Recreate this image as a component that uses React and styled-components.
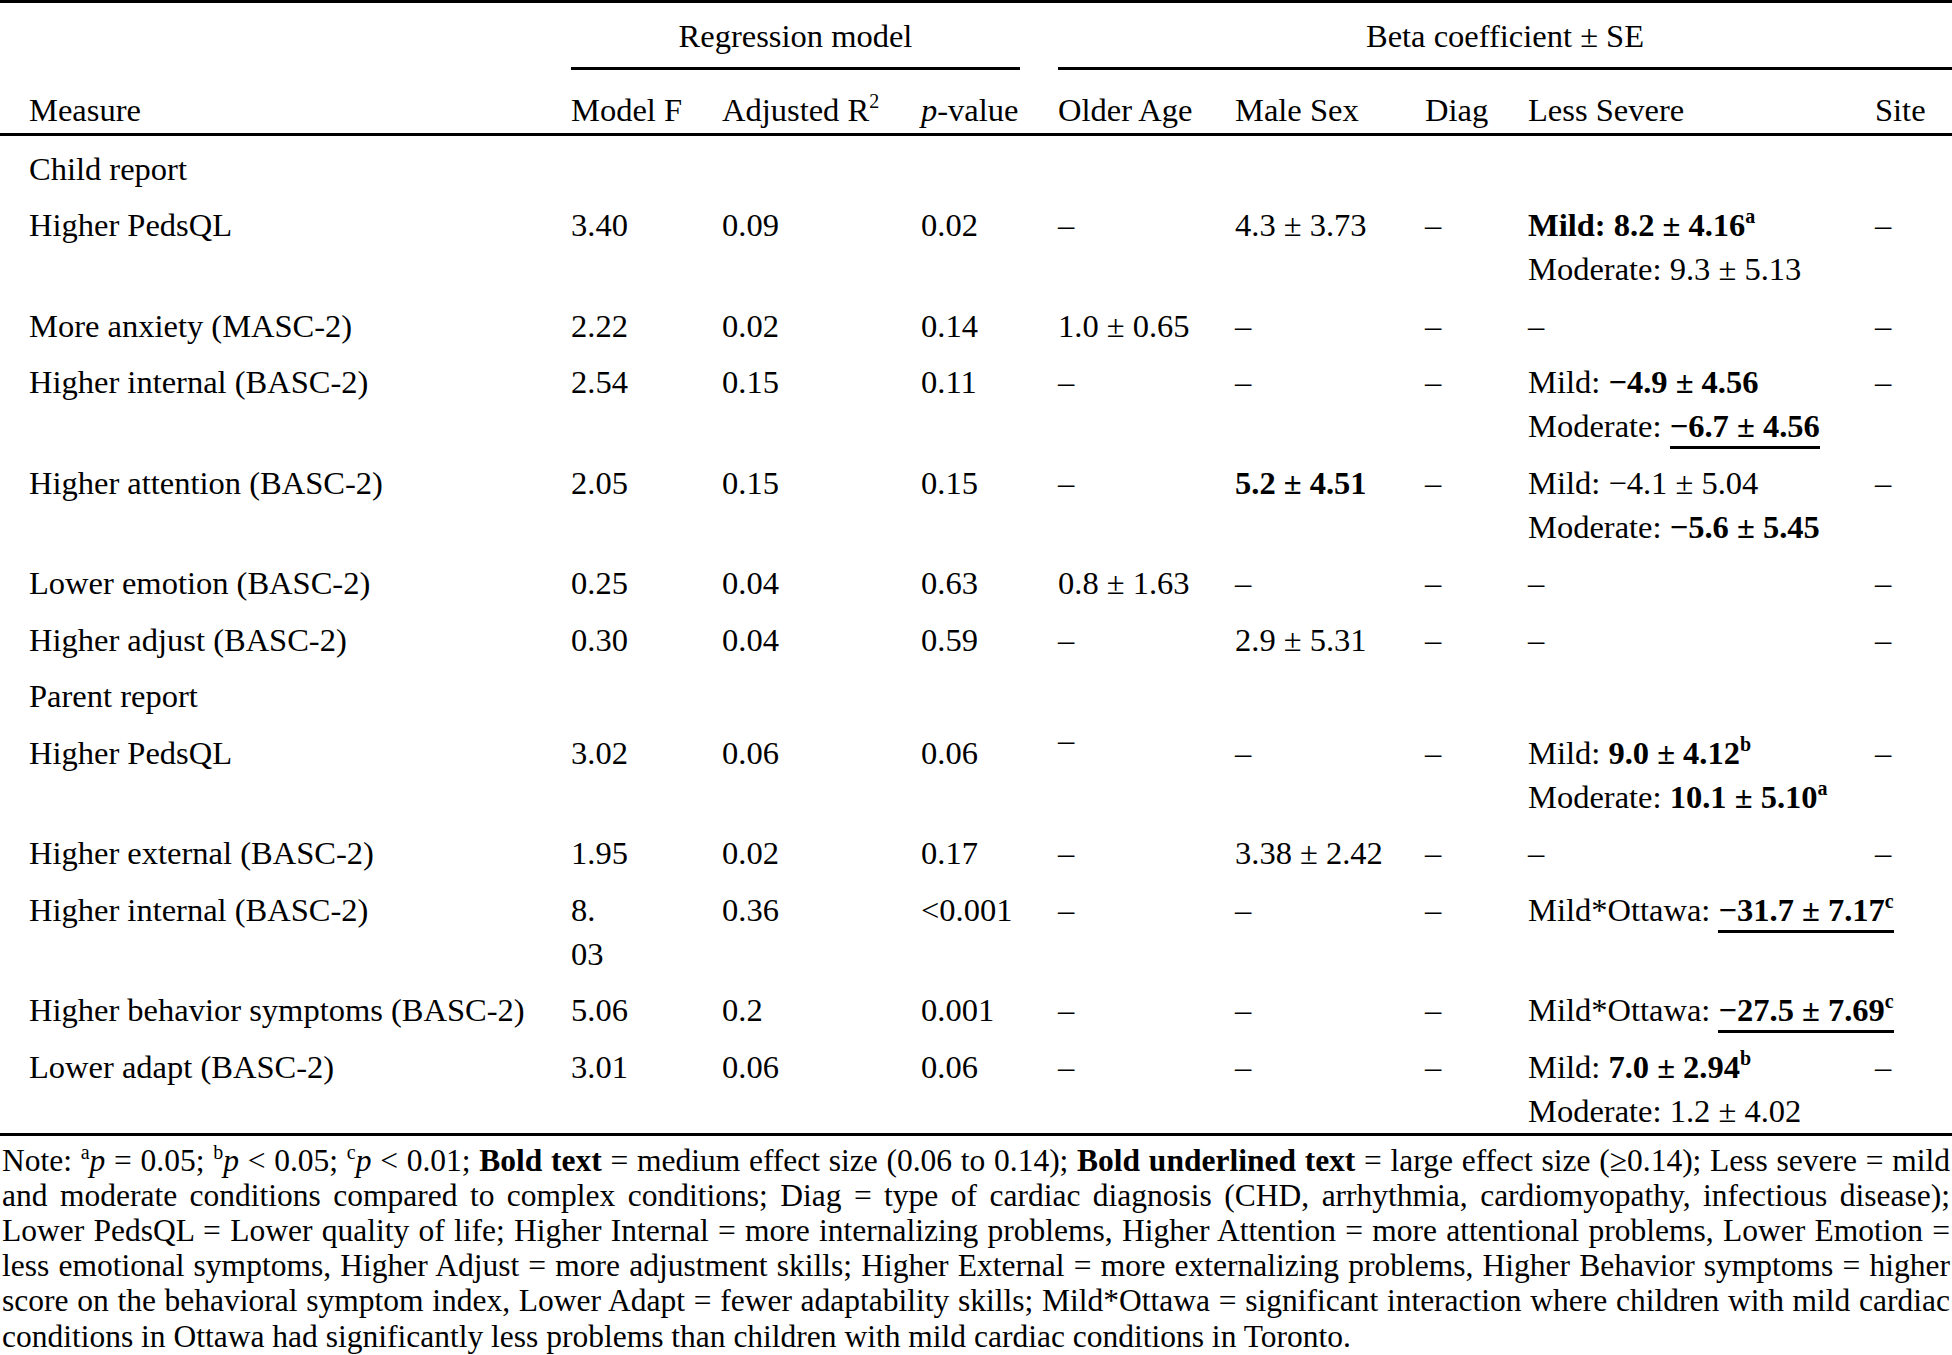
import React from "react";
import styled, { createGlobalStyle } from "styled-components";

const GlobalStyle = createGlobalStyle`
  body {
    margin: 0;
    background: #fff;
    color: #000;
    font-family: "Liberation Serif", "Times New Roman", serif;
  }
`;

const Page = styled.div`
  width: 1952px;
`;

const Table = styled.table`
  width: 1952px;
  table-layout: fixed;
  border-collapse: separate;
  border-spacing: 0;
  border-top: 3px solid #000;
  border-bottom: 3px solid #000;
  font-size: 32.5px;
`;

const GroupCell = styled.th`
  padding: 11px 0 0 0;
  font-weight: normal;
  line-height: 44px;
`;

const GroupTitle = styled.div`
  text-align: center;
  border-bottom: 3px solid #000;
  padding-bottom: 9px;
  margin-right: ${(p) => p.$trim || 0}px;
`;

const HeadCell = styled.th`
  text-align: left;
  font-weight: normal;
  line-height: 44px;
  white-space: nowrap;
  padding: 18px 0 1px ${(p) => (p.$lead ? 29 : 0)}px;
  border-bottom: 3px solid #000;
`;

const Cell = styled.td`
  vertical-align: top;
  line-height: 44px;
  white-space: nowrap;
  padding-top: ${(p) => (p.$first ? 10.5 : 6.5)}px;
  padding-bottom: ${(p) => (p.$last ? 0 : 6)}px;
  padding-left: ${(p) => (p.$lead ? 29 : 0)}px;
  padding-right: 0;
  overflow: visible;
`;

const Line = styled.div``;

const Sup = styled.sup`
  font-size: 20px;
  line-height: 0;
  vertical-align: 13px;
`;

const Bold = styled.b`
  font-weight: bold;
`;

const Strong = styled.span`
  font-weight: bold;
  border-bottom: 3px solid #000;
  padding-bottom: 2px;
`;

const Raised = styled.span`
  vertical-align: 13px;
  line-height: 0;
`;

const Note = styled.div`
  margin-top: 7px;
  padding: 0 2px;
  font-size: 31.5px;
  line-height: 35.2px;
`;

const NoteLine = styled.div`
  white-space: nowrap;
  text-align: justify;
  text-align-last: ${(p) => (p.$end ? "left" : "justify")};
`;

const NoteSup = styled.sup`
  font-size: 20px;
  line-height: 0;
  vertical-align: 12px;
`;

const Ital = styled.i`
  font-style: italic;
`;

const widths = [571, 151, 199, 137, 177, 190, 103, 347, 77];

const D = "–";

const rows = [
  { section: "Child report" },
  {
    m: "Higher PedsQL", f: "3.40", r: "0.09", p: "0.02", age: D, sex: "4.3 ± 3.73", diag: D,
    sev: [<Bold key="a">Mild: 8.2 ± 4.16<Sup>a</Sup></Bold>, "Moderate: 9.3 ± 5.13"], site: D,
  },
  { m: "More anxiety (MASC-2)", f: "2.22", r: "0.02", p: "0.14", age: "1.0 ± 0.65", sex: D, diag: D, sev: D, site: D },
  {
    m: "Higher internal (BASC-2)", f: "2.54", r: "0.15", p: "0.11", age: D, sex: D, diag: D,
    sev: [
      <span key="a">Mild: <Bold>−4.9 ± 4.56</Bold></span>,
      <span key="b">Moderate: <Strong>−6.7 ± 4.56</Strong></span>,
    ],
    site: D,
  },
  {
    m: "Higher attention (BASC-2)", f: "2.05", r: "0.15", p: "0.15", age: D, sex: <Bold>5.2 ± 4.51</Bold>, diag: D,
    sev: ["Mild: −4.1 ± 5.04", <span key="b">Moderate: <Bold>−5.6 ± 5.45</Bold></span>],
    site: D,
  },
  { m: "Lower emotion (BASC-2)", f: "0.25", r: "0.04", p: "0.63", age: "0.8 ± 1.63", sex: D, diag: D, sev: D, site: D },
  { m: "Higher adjust (BASC-2)", f: "0.30", r: "0.04", p: "0.59", age: D, sex: "2.9 ± 5.31", diag: D, sev: D, site: D },
  { section: "Parent report" },
  {
    m: "Higher PedsQL", f: "3.02", r: "0.06", p: "0.06", age: <Raised>–</Raised>, sex: D, diag: D,
    sev: [
      <span key="a">Mild: <Bold>9.0 ± 4.12<Sup>b</Sup></Bold></span>,
      <span key="b">Moderate: <Bold>10.1 ± 5.10<Sup>a</Sup></Bold></span>,
    ],
    site: D,
  },
  { m: "Higher external (BASC-2)", f: "1.95", r: "0.02", p: "0.17", age: D, sex: "3.38 ± 2.42", diag: D, sev: D, site: D },
  {
    m: "Higher internal (BASC-2)", f: ["8.", "03"], r: "0.36", p: "<0.001", age: D, sex: D, diag: D,
    sev: <span>Mild*Ottawa: <Strong>−31.7 ± 7.17<Sup>c</Sup></Strong></span>,
    site: "",
  },
  {
    m: "Higher behavior symptoms (BASC-2)", f: "5.06", r: "0.2", p: "0.001", age: D, sex: D, diag: D,
    sev: <span>Mild*Ottawa: <Strong>−27.5 ± 7.69<Sup>c</Sup></Strong></span>,
    site: "",
  },
  {
    m: "Lower adapt (BASC-2)", f: "3.01", r: "0.06", p: "0.06", age: D, sex: D, diag: D,
    sev: [<span key="a">Mild: <Bold>7.0 ± 2.94<Sup>b</Sup></Bold></span>, "Moderate: 1.2 ± 4.02"],
    site: D,
  },
];

const keys = ["m", "f", "r", "p", "age", "sex", "diag", "sev", "site"];

const noteLines = [
  <>
    Note: <NoteSup>a</NoteSup>
    <Ital>p</Ital> = 0.05; <NoteSup>b</NoteSup>
    <Ital>p</Ital> &lt; 0.05; <NoteSup>c</NoteSup>
    <Ital>p</Ital> &lt; 0.01; <Bold>Bold text</Bold> = medium effect size (0.06 to 0.14);{" "}
    <Bold>Bold underlined text</Bold> = large effect size (≥0.14); Less severe = mild
  </>,
  "and moderate conditions compared to complex conditions; Diag = type of cardiac diagnosis (CHD, arrhythmia, cardiomyopathy, infectious disease);",
  "Lower PedsQL = Lower quality of life; Higher Internal = more internalizing problems, Higher Attention = more attentional problems, Lower Emotion =",
  "less emotional symptoms, Higher Adjust = more adjustment skills; Higher External = more externalizing problems, Higher Behavior symptoms = higher",
  "score on the behavioral symptom index, Lower Adapt = fewer adaptability skills; Mild*Ottawa = significant interaction where children with mild cardiac",
  "conditions in Ottawa had significantly less problems than children with mild cardiac conditions in Toronto.",
];

const renderValue = (v) =>
  Array.isArray(v) ? v.map((line, i) => <Line key={i}>{line}</Line>) : v;

export default function App() {
  const lastIndex = rows.length - 1;
  return (
    <Page>
      <GlobalStyle />
      <Table>
        <colgroup>
          {widths.map((w, i) => (
            <col key={i} style={{ width: w }} />
          ))}
        </colgroup>
        <thead>
          <tr>
            <GroupCell />
            <GroupCell colSpan={3}>
              <GroupTitle $trim={38}>Regression model</GroupTitle>
            </GroupCell>
            <GroupCell colSpan={5}>
              <GroupTitle>Beta coefficient ± SE</GroupTitle>
            </GroupCell>
          </tr>
          <tr>
            <HeadCell $lead>Measure</HeadCell>
            <HeadCell>Model F</HeadCell>
            <HeadCell>
              Adjusted R<Sup>2</Sup>
            </HeadCell>
            <HeadCell>
              <Ital>p</Ital>-value
            </HeadCell>
            <HeadCell>Older Age</HeadCell>
            <HeadCell>Male Sex</HeadCell>
            <HeadCell>Diag</HeadCell>
            <HeadCell>Less Severe</HeadCell>
            <HeadCell>Site</HeadCell>
          </tr>
        </thead>
        <tbody>
          {rows.map((row, i) =>
            row.section ? (
              <tr key={i}>
                <Cell $lead $first={i === 0} colSpan={9}>
                  {row.section}
                </Cell>
              </tr>
            ) : (
              <tr key={i}>
                {keys.map((k, j) => (
                  <Cell key={k} $lead={j === 0} $last={i === lastIndex}>
                    {renderValue(row[k])}
                  </Cell>
                ))}
              </tr>
            )
          )}
        </tbody>
      </Table>
      <Note>
        {noteLines.map((line, i) => (
          <NoteLine key={i} $end={i === noteLines.length - 1}>
            {line}
          </NoteLine>
        ))}
      </Note>
    </Page>
  );
}
